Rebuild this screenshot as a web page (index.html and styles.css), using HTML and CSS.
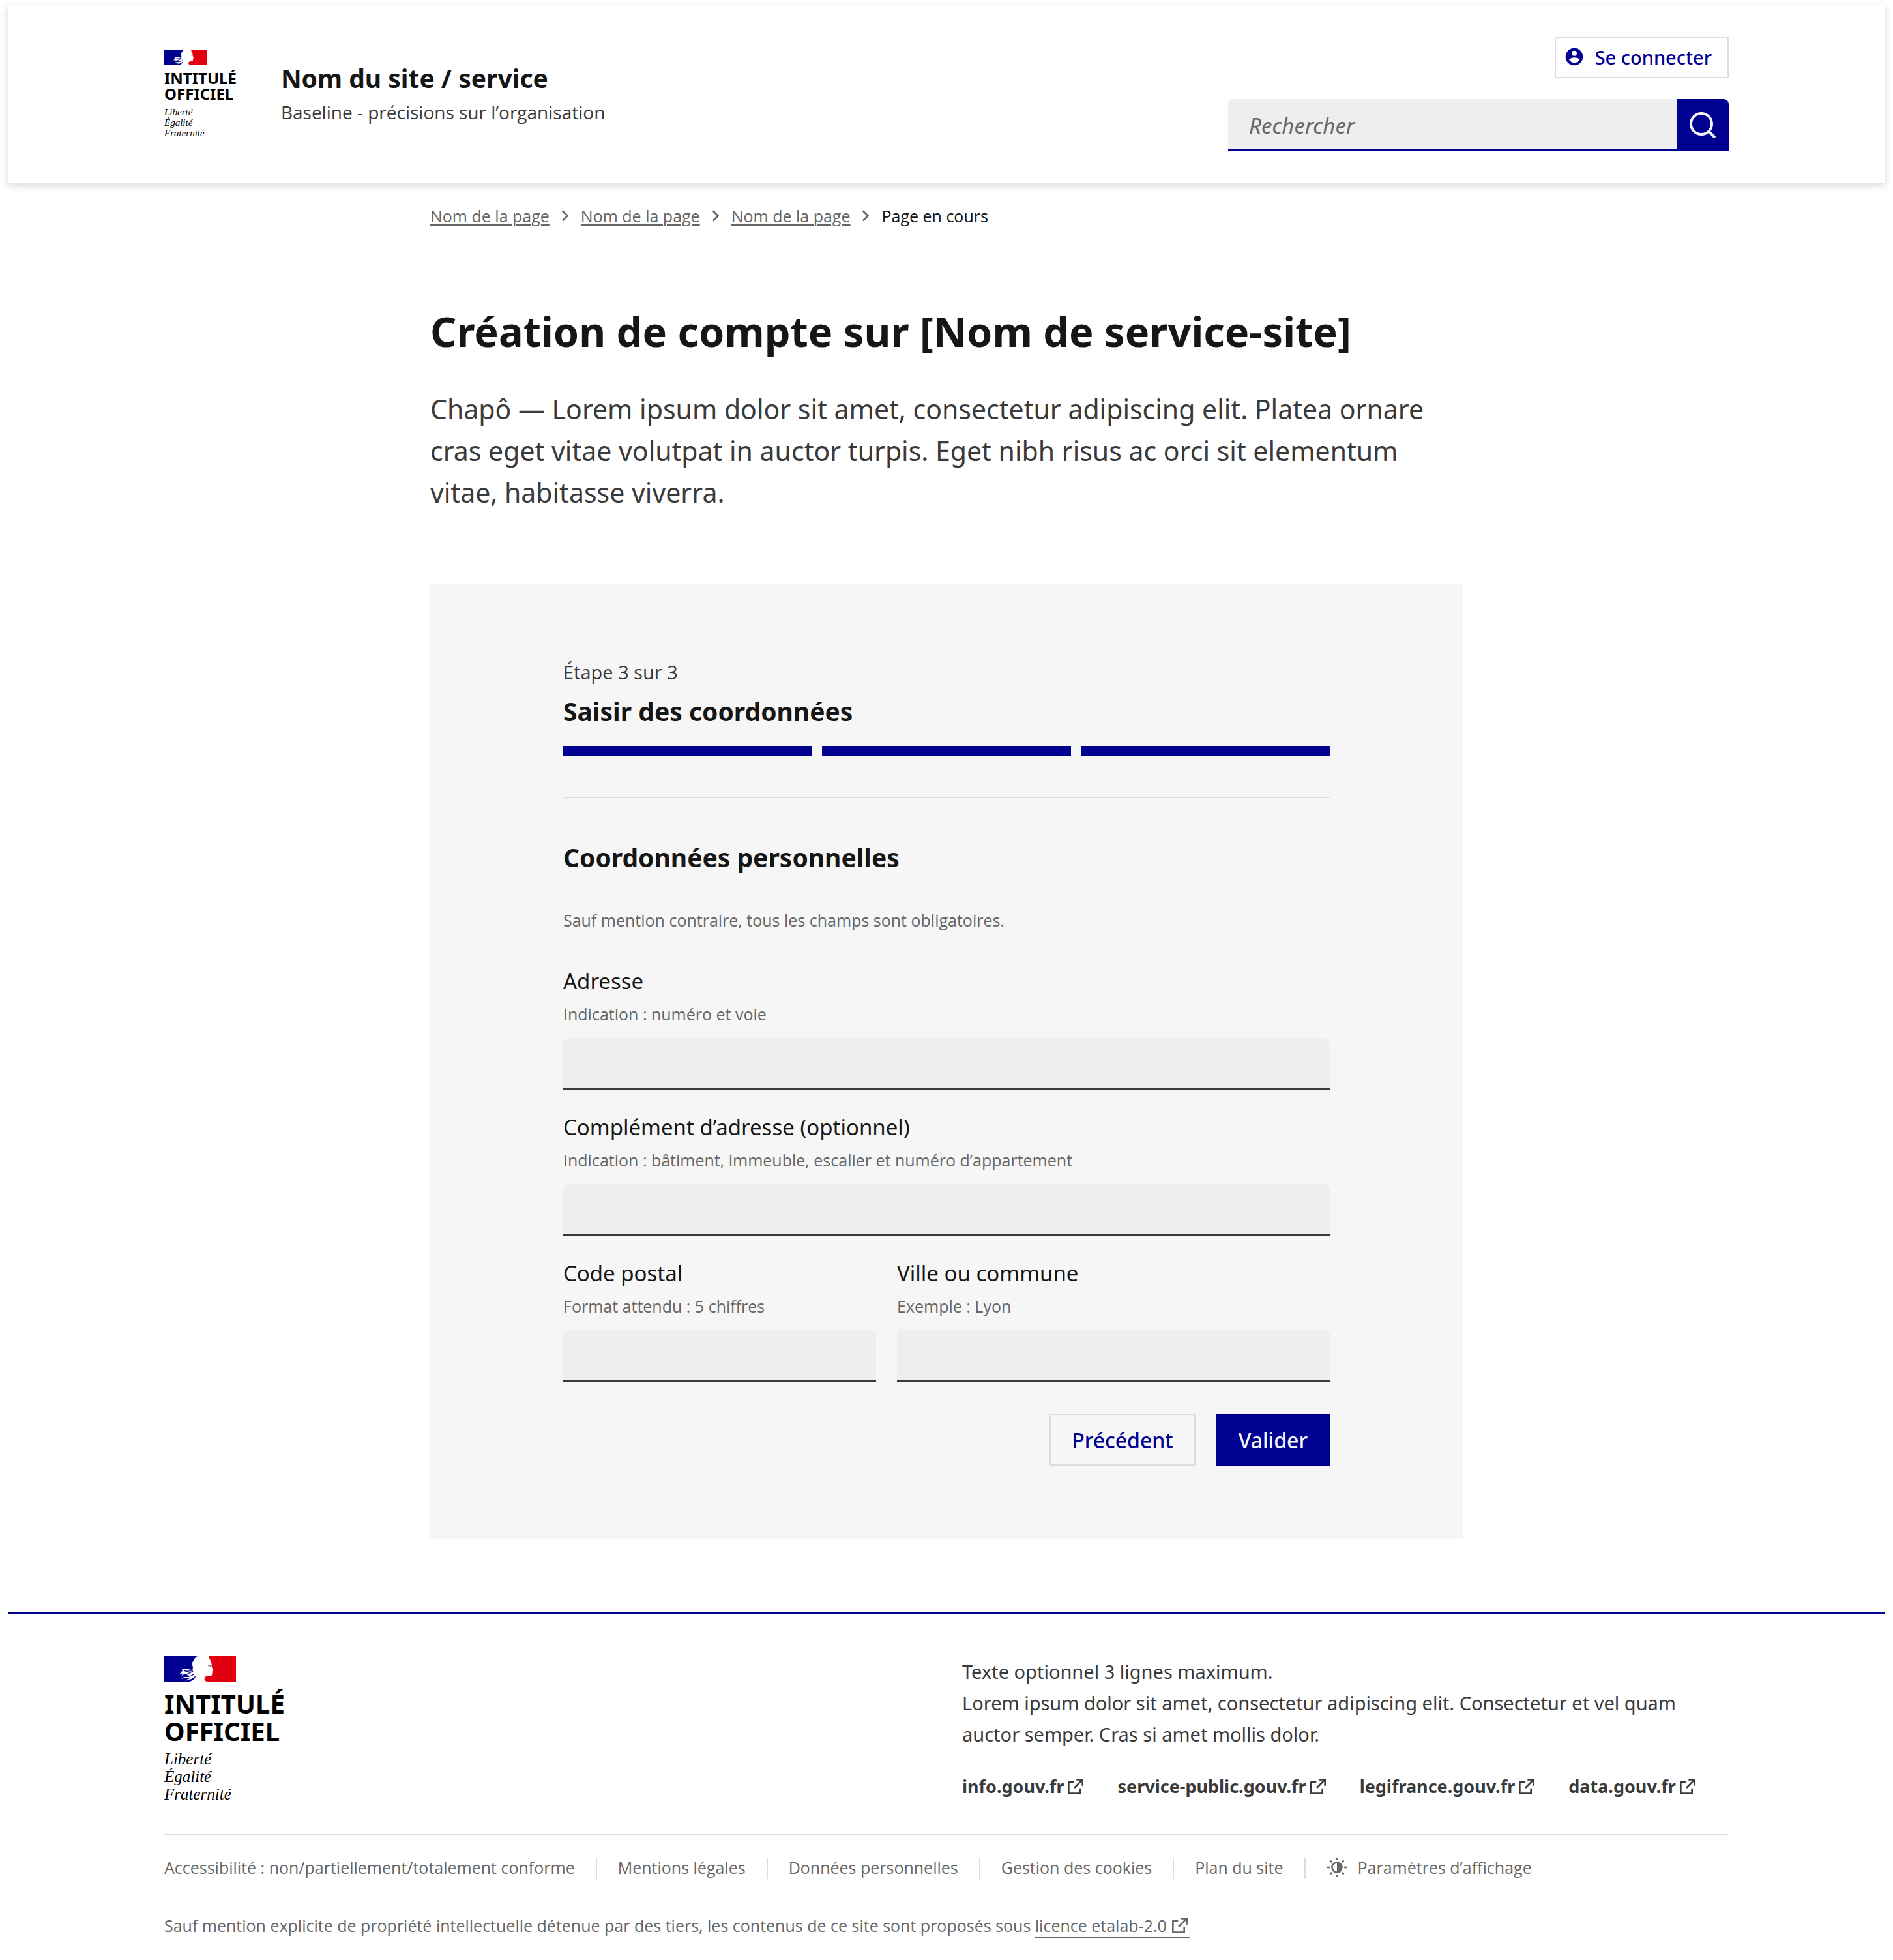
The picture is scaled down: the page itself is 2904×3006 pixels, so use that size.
FILE: index.html
```
<!DOCTYPE html>
<html lang="fr">
<head>
    <meta charset="UTF-8">
    <meta name="viewport" content="width=device-width, initial-scale=1.0">
    <title>Création de compte</title>
    <link rel="stylesheet" href="styles.css">
</head>
<body>
    <!-- icons and flag shared by the page -->
    <svg class="sprite" aria-hidden="true">
        <symbol id="flag" viewBox="0 0 110 40">
            <path fill="#fff" d="M0 0h110v40H0z"/>
            <path fill="#000091" d="M0 0h51c-2 .8-3.200 2-4.500 4-1.500 2.600-3.600 5-3.600 8 0 2.400 1.600 5 .8 7 .2 3 1.800 5 2.600 7.500L49 29l-2 4c-3 3-6 5.500-9.500 7H0z"/>
            <path fill="#e1000f" d="M110 0v40H67.500c-2.500-1-5.500-2.300-6-4.500.6-2.600 1.800-4.800 4.500-5.200 2.800-.5 5.500.4 6.800-.8 1-1.200.2-2.500.6-3.600.8-1 .4-1.500.2-2.200l.6-2c.7-.6 1.200-1 .8-1.700-1-1.600-2.200-3-2.400-4.600-.2-1.400.4-2.400-.2-3.800-.5-1.400-.2-2.600-1.300-3.600C70 7 71 6 70 5c-.8-1-1.200-1-.8-2.200-.8-.8-.6-1.800-1.200-2.800z"/>
            <path fill="#fff" d="M23 28.500c2-3 4-5.500 6.500-7l-4 .5c2.500-2.500 5-3.500 8.500-2.800 4 .8 8 3 11.500.6L49 30c-3 1.500-4 3-6.500 4.600-3 1.600-7 1.600-10.500 3 2-2.400 5-2 7-3.600-4 .6-8.500-.8-12.500.6 2-2.500 5-2.800 8-2.600 2 0 3-1 4.500-1.800-3-.2-5-2.600-8-2.200-2 .2-3 1.400-4.500 2 .6-1.400 1.400-2.200 2.500-3-2.200-.4-4 0-6 1.500z"/>
            <path fill="none" stroke="#000091" stroke-width="1.400" d="M31 22.500c4 1 8 1.200 12-1M33 28.500c4-1.500 7-3.500 11-5.500M39 38c3-1.500 6-3 8.500-5.500M36 31.500c3.500-.3 7-2 10-4"/>
            <path fill="none" stroke="#888" d="M67 14.500h4M69.500 15.500h1.500v1.500"/>
        </symbol>
        <symbol id="account" viewBox="0 0 24 24">
            <path d="M12 2C6.480 2 2 6.480 2 12s4.480 10 10 10 10-4.480 10-10S17.520 2 12 2zM6.023 15.416C7.491 17.606 9.695 19 12.160 19c2.464 0 4.669-1.393 6.136-3.584A8.968 8.968 0 0 0 12.160 13a8.968 8.968 0 0 0-6.137 2.416zM12 11a3 3 0 1 0 0-6 3 3 0 0 0 0 6z" fill-rule="evenodd"/>
        </symbol>
        <symbol id="chevron" viewBox="0 0 24 24">
            <path d="M13.171 12 8.222 7.050l1.414-1.414L16 12l-6.364 6.364-1.414-1.414z"/>
        </symbol>
        <symbol id="external" viewBox="0 0 24 24">
            <path d="M10 6v2H5v11h11v-5h2v6a1 1 0 0 1-1 1H4a1 1 0 0 1-1-1V7a1 1 0 0 1 1-1h6zm11-3v8h-2V6.413l-7.793 7.794-1.414-1.414L17.585 5H13V3h8z"/>
        </symbol>
        <symbol id="theme" viewBox="0 0 32 32">
            <circle cx="16" cy="16" r="7.500" fill="none" stroke="currentColor" stroke-width="2.600"/>
            <path d="M16 8a8 8 0 0 1 0 16z"/>
            <path fill="none" stroke="currentColor" stroke-width="2.600" d="M16 1v4M16 27v4M1 16h4M27 16h4M5.400 5.400l2.800 2.800M23.800 23.800l2.800 2.800M5.400 26.600l2.800-2.800M23.800 8.200l2.800-2.800"/>
        </symbol>
    </svg>

    <header class="header">
        <div class="header-content">
            <div class="brand">
                <div class="logo">
                    <svg class="logo-flag"><use href="#flag"/></svg>
                    <p class="logo-title">Intitulé<br>officiel</p>
                    <p class="logo-motto">Liberté<br>Égalité<br>Fraternité</p>
                </div>
                <div>
                    <p class="site-name">Nom du site / service</p>
                    <p class="site-baseline">Baseline - précisions sur l’organisation</p>
                </div>
            </div>

            <div class="tools">
                <button type="button" class="btn-login">
                    <svg class="icon"><use href="#account"/></svg>
                    Se connecter
                </button>
                <form class="search" role="search">
                    <input type="search" class="search-input" placeholder="Rechercher" aria-label="Rechercher">
                    <button type="button" class="search-btn" aria-label="Lancer la recherche">
                        <svg class="search-icon" viewBox="0 0 40 40">
                            <circle cx="18" cy="18" r="16"/>
                            <path d="M29.500 29.500l9.500 9.500"/>
                        </svg>
                    </button>
                </form>
            </div>
        </div>
    </header>

    <main class="main">
        <nav class="breadcrumb" aria-label="Fil d’Ariane">
            <a href="#">Nom de la page</a>
            <svg class="icon"><use href="#chevron"/></svg>
            <a href="#">Nom de la page</a>
            <svg class="icon"><use href="#chevron"/></svg>
            <a href="#">Nom de la page</a>
            <svg class="icon"><use href="#chevron"/></svg>
            <span class="current">Page en cours</span>
        </nav>

        <h1>Création de compte sur [Nom de service-site]</h1>
        <p class="lead">Chapô — Lorem ipsum dolor sit amet, consectetur adipiscing elit. Platea ornare cras eget vitae volutpat in auctor turpis. Eget nibh risus ac orci sit elementum vitae, habitasse viverra.</p>

        <section class="card">
            <div class="stepper">
                <p class="step-state">Étape 3 sur 3</p>
                <h2>Saisir des coordonnées</h2>
                <div class="steps">
                    <span></span>
                    <span></span>
                    <span></span>
                </div>
            </div>

            <form class="form">
                <h2>Coordonnées personnelles</h2>
                <p class="notice">Sauf mention contraire, tous les champs sont obligatoires.</p>

                <div class="fields">
                    <div class="field">
                        <label for="adresse">Adresse</label>
                        <p class="hint" id="adresse-hint">Indication : numéro et voie</p>
                        <input type="text" id="adresse" aria-describedby="adresse-hint">
                    </div>
                    <div class="field">
                        <label for="complement">Complément d’adresse (optionnel)</label>
                        <p class="hint" id="complement-hint">Indication : bâtiment, immeuble, escalier et numéro d’appartement</p>
                        <input type="text" id="complement" aria-describedby="complement-hint">
                    </div>
                    <div class="field-row">
                        <div class="field">
                            <label for="cp">Code postal</label>
                            <p class="hint" id="cp-hint">Format attendu : 5 chiffres</p>
                            <input type="text" id="cp" aria-describedby="cp-hint">
                        </div>
                        <div class="field">
                            <label for="ville">Ville ou commune</label>
                            <p class="hint" id="ville-hint">Exemple : Lyon</p>
                            <input type="text" id="ville" aria-describedby="ville-hint">
                        </div>
                    </div>
                </div>

                <div class="actions">
                    <button type="button" class="btn btn-secondary">Précédent</button>
                    <button type="button" class="btn">Valider</button>
                </div>
            </form>
        </section>
    </main>

    <footer class="footer">
        <div class="footer-content">
            <div class="footer-top">
                <div class="logo logo-large">
                    <svg class="logo-flag"><use href="#flag"/></svg>
                    <p class="logo-title">Intitulé<br>officiel</p>
                    <p class="logo-motto">Liberté<br>Égalité<br>Fraternité</p>
                </div>
                <div class="footer-text">
                    <p>Texte optionnel 3 lignes maximum.<br>Lorem ipsum dolor sit amet, consectetur adipiscing elit. Consectetur et vel quam auctor semper. Cras si amet mollis dolor.</p>
                    <div class="gouv-links">
                        <a href="#">info.gouv.fr<svg class="icon"><use href="#external"/></svg></a>
                        <a href="#">service-public.gouv.fr<svg class="icon"><use href="#external"/></svg></a>
                        <a href="#">legifrance.gouv.fr<svg class="icon"><use href="#external"/></svg></a>
                        <a href="#">data.gouv.fr<svg class="icon"><use href="#external"/></svg></a>
                    </div>
                </div>
            </div>

            <ul class="footer-links">
                <li><a href="#">Accessibilité : non/partiellement/totalement conforme</a></li>
                <li><a href="#">Mentions légales</a></li>
                <li><a href="#">Données personnelles</a></li>
                <li><a href="#">Gestion des cookies</a></li>
                <li><a href="#">Plan du site</a></li>
                <li>
                    <button type="button" class="display-btn">
                        <svg class="icon"><use href="#theme"/></svg>
                        Paramètres d’affichage
                    </button>
                </li>
            </ul>

            <p class="licence">Sauf mention explicite de propriété intellectuelle détenue par des tiers, les contenus de ce site sont proposés sous <a href="#">licence etalab-2.0<svg class="icon"><use href="#external"/></svg></a></p>
        </div>
    </footer>
</body>
</html>
```
FILE: styles.css
```
* {
    box-sizing: border-box;
}

body {
    margin: 0;
    padding: 8px 12px 0;
    background-color: #ffffff;
    color: #161616;
    font-family: "Noto Sans", sans-serif;
}

h1, h2, p, ul {
    margin: 0;
    padding: 0;
}

button, input {
    font-family: inherit;
    margin: 0;
}

a {
    color: inherit;
    text-decoration: none;
}

.sprite {
    display: none;
}

.icon {
    width: 32px;
    height: 32px;
    flex-shrink: 0;
    fill: currentColor;
}

.site-baseline,
.breadcrumb,
.step-state,
.notice,
.hint,
.footer-links,
.licence {
    font-family: "Open Sans", sans-serif;
}

/* Header */

.header {
    padding: 48px 0;
    background-color: #ffffff;
    box-shadow: 0 4px 12px rgba(0, 0, 18, 0.16);
}

.header-content,
.footer-content {
    max-width: 2400px;
    margin: 0 auto;
}

.header-content {
    display: flex;
    align-items: center;
    justify-content: space-between;
}

.brand {
    display: flex;
    align-items: center;
    gap: 68px;
}

.logo {
    color: #000000;
}

.logo-flag {
    display: block;
    width: 66px;
    height: 24px;
}

.logo-title {
    margin-top: 8px;
    font-size: 24px;
    line-height: 24px;
    font-weight: 700;
    text-transform: uppercase;
}

.logo-motto {
    margin-top: 8px;
    font-family: "Liberation Serif", serif;
    font-style: italic;
    font-size: 15px;
    line-height: 16px;
}

.logo-large .logo-flag {
    width: 110px;
    height: 40px;
}

.logo-large .logo-title {
    margin-top: 12px;
    font-size: 40px;
    line-height: 42px;
}

.logo-large .logo-motto {
    font-size: 25px;
    line-height: 27px;
}

.site-name {
    font-size: 39px;
    line-height: 56px;
    font-weight: 700;
}

.site-baseline {
    color: #3a3a3a;
    font-size: 28px;
    line-height: 48px;
}

.tools {
    display: flex;
    flex-direction: column;
    align-items: flex-end;
    gap: 32px;
    width: 768px;
}

.btn-login {
    display: flex;
    align-items: center;
    gap: 16px;
    height: 64px;
    padding: 0 24px 2px 12px;
    border: 2px solid #dddddd;
    background: none;
    color: #000091;
    font-size: 29px;
    font-weight: 500;
}

.search {
    display: flex;
    width: 100%;
    height: 80px;
}

.search-input {
    flex: 1;
    padding: 4px 32px 0;
    border: 0;
    border-bottom: 4px solid #000091;
    border-radius: 8px 0 0 0;
    background-color: #eeeeee;
    font-size: 33px;
}

.search-input::placeholder {
    color: #666666;
    font-style: italic;
    opacity: 1;
}

.search-btn {
    display: flex;
    align-items: center;
    justify-content: center;
    width: 80px;
    padding: 0;
    border: 0;
    border-radius: 0 8px 0 0;
    background-color: #000091;
}

.search-icon {
    width: 40px;
    height: 40px;
    fill: none;
    stroke: #f5f5fe;
    stroke-width: 4;
}

/* Main */

.main {
    max-width: 1584px;
    margin: 0 auto;
}

.breadcrumb {
    display: flex;
    align-items: center;
    gap: 8px;
    padding-top: 31px;
    color: #666666;
    font-size: 25px;
    line-height: 40px;
}

.breadcrumb a {
    text-decoration: underline;
    text-decoration-thickness: 2px;
    text-underline-offset: 3px;
}

.current {
    color: #161616;
}

h1 {
    margin-top: 117px;
    font-size: 63px;
    line-height: 80px;
}

.lead {
    margin-top: 47px;
    color: #3a3a3a;
    font-size: 41px;
    line-height: 64px;
}

.card {
    margin-top: 109px;
    padding: 112px 204px;
    background-color: #f6f6f6;
}

h2 {
    font-size: 39px;
    line-height: 56px;
}

.stepper {
    padding-bottom: 62px;
    border-bottom: 2px solid #dddddd;
}

.step-state {
    margin-bottom: 9px;
    color: #3a3a3a;
    font-size: 29px;
    line-height: 46px;
}

.steps {
    display: grid;
    grid-template-columns: repeat(3, 1fr);
    gap: 16px;
    margin-top: 25px;
}

.steps span {
    height: 16px;
    background-color: #000091;
}

.form {
    padding-top: 63px;
}

.notice {
    margin: 48px 0 50px;
    color: #666666;
    font-size: 25px;
    line-height: 40px;
}

.fields {
    display: flex;
    flex-direction: column;
    gap: 33px;
}

.field-row {
    display: grid;
    grid-template-columns: 480px 1fr;
    gap: 32px;
}

.field label {
    display: block;
    font-size: 33px;
    line-height: 48px;
}

.hint {
    margin: 6px 0 17px;
    color: #666666;
    font-size: 25px;
    line-height: 40px;
}

.field input {
    display: block;
    width: 100%;
    height: 80px;
    padding: 0 32px;
    border: 0;
    border-bottom: 4px solid #3a3a3a;
    border-radius: 8px 8px 0 0;
    background-color: #eeeeee;
    font-size: 32px;
}

.actions {
    display: flex;
    justify-content: flex-end;
    gap: 32px;
    margin-top: 48px;
}

.btn {
    height: 80px;
    padding: 0 32px;
    border: 2px solid #000091;
    background-color: #000091;
    color: #f5f5fe;
    font-size: 32px;
    font-weight: 500;
}

.btn-secondary {
    border-color: #dddddd;
    background: none;
    color: #000091;
}

/* Footer */

.footer {
    margin-top: 112px;
    padding: 64px 0 32px;
    border-top: 4px solid #000091;
}

.footer-top {
    display: flex;
    justify-content: space-between;
    padding-bottom: 47px;
    border-bottom: 2px solid #dddddd;
}

.footer-text {
    width: 1176px;
    color: #3a3a3a;
    font-size: 29px;
    line-height: 48px;
}

.gouv-links {
    display: flex;
    gap: 48px;
    margin-top: 32px;
    font-size: 27px;
    font-weight: 700;
}

.gouv-links a {
    display: flex;
    align-items: center;
    gap: 2px;
}

.footer-links {
    display: flex;
    align-items: flex-end;
    padding-top: 32px;
    list-style: none;
    color: #666666;
    font-size: 25px;
    line-height: 36px;
}

.footer-links li {
    display: flex;
    align-items: flex-end;
}

.footer-links li + li::before {
    content: "";
    width: 2px;
    height: 32px;
    margin: 0 32px;
    background-color: #dddddd;
}

.display-btn {
    display: flex;
    align-items: center;
    gap: 16px;
    padding: 0;
    border: 0;
    background: none;
    color: inherit;
    font-size: 25px;
    line-height: 36px;
}

.licence {
    margin-top: 51px;
    color: #666666;
    font-size: 25px;
    line-height: 40px;
}

.licence a {
    display: inline-flex;
    align-items: center;
    gap: 4px;
    height: 36px;
    border-bottom: 2px solid #666666;
}
```
